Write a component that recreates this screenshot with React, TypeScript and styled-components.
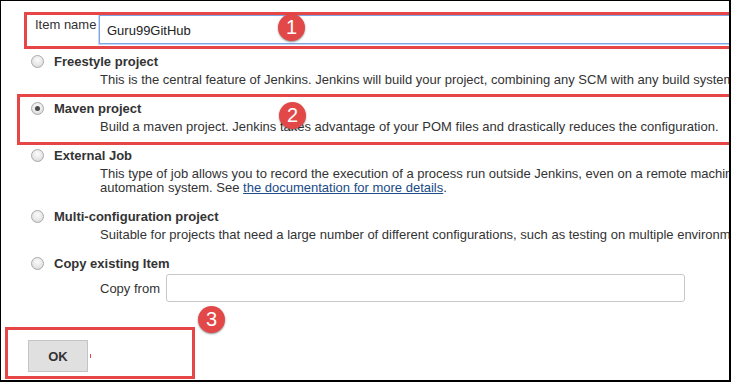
import React from 'react';
import styled, { createGlobalStyle } from 'styled-components';

interface Option {
  id: string;
  label: string;
  description: React.ReactNode;
  checked?: boolean;
}

const GlobalStyle = createGlobalStyle`
  html, body {
    margin: 0;
    padding: 0;
    background: #ffffff;
  }
  body {
    font-family: "Liberation Sans", Arial, sans-serif;
  }
`;

const Frame = styled.div`
  position: relative;
  width: 731px;
  height: 382px;
  box-sizing: border-box;
  border-style: solid;
  border-color: #000;
  border-width: 1px 2px 2px 1px;
  background: #fff;
  overflow: hidden;
  color: #333;
  font-family: "Liberation Sans", Arial, sans-serif;
  font-size: 13px;
  padding-top: 14px;
`;

const Section = styled.div`
  position: relative;
`;

const ItemRow = styled(Section)`
  display: flex;
  align-items: flex-start;
  padding-left: 34px;
  height: 29px;
`;

const ItemLabel = styled.label`
  width: 64px;
  flex: none;
  padding-top: 2px;
  line-height: 15px;
`;

const NameInput = styled.input`
  flex: none;
  width: 700px;
  height: 29px;
  box-sizing: border-box;
  border: 1px solid #7ea6e6;
  box-shadow: 0 0 0 1px #c4d7f5;
  outline: none;
  padding: 1px 0 0 7px;
  font-family: "Liberation Sans", Arial, sans-serif;
  font-size: 13px;
  color: #222;
`;

const OptionList = styled.div`
  display: flex;
  flex-direction: column;
  gap: 12px;
  margin-top: 8px;
`;

const OptionHead = styled.label`
  display: flex;
  align-items: center;
  height: 19px;
  padding-left: 30px;
  gap: 10px;
  font-weight: bold;
  white-space: nowrap;
`;

const Radio = styled.span<{ $checked?: boolean }>`
  position: relative;
  flex: none;
  width: 13px;
  height: 13px;
  box-sizing: border-box;
  border-radius: 50%;
  border: 1px solid #a9a9a9;
  background: radial-gradient(circle at 50% 35%, #fbfbfb 0%, #e6e6e6 60%, #cfcfcf 100%);

  &::after {
    content: '';
    display: ${p => (p.$checked ? 'block' : 'none')};
    position: absolute;
    left: 3px;
    top: 3px;
    width: 5px;
    height: 5px;
    border-radius: 50%;
    background: #4a4a4a;
  }
`;

const Description = styled.div`
  margin-top: 2px;
  padding-left: 99px;
  line-height: 14px;
  white-space: nowrap;
`;

const DocLink = styled.a`
  color: #204a87;
  text-decoration: underline;
`;

const CopyRow = styled.div`
  display: flex;
  align-items: center;
  margin-top: 1px;
  padding-left: 99px;
  gap: 6px;
`;

const CopyInput = styled.input`
  width: 519px;
  height: 28px;
  box-sizing: border-box;
  border: 1px solid #c8c8c8;
  border-radius: 3px;
  outline: none;
`;

const Footer = styled(Section)`
  display: flex;
  align-items: center;
  margin-top: 38px;
  padding-left: 27px;
  gap: 2px;
`;

const OkButton = styled.button`
  width: 60px;
  height: 32px;
  background: #e0e0e0;
  border: 1px solid #c4c4c4;
  border-radius: 0;
  font-family: "Liberation Sans", Arial, sans-serif;
  font-size: 13px;
  font-weight: bold;
  color: #333;
`;

const CursorMark = styled.span`
  width: 1px;
  height: 4px;
  background: #e64646;
`;

const Annotation = styled.div<{ $top: number; $left: number; $width: number; $height: number }>`
  position: absolute;
  top: ${p => p.$top}px;
  left: ${p => p.$left}px;
  width: ${p => p.$width}px;
  height: ${p => p.$height}px;
  box-sizing: border-box;
  border: 3px solid #e64646;
  pointer-events: none;
`;

const Badge = styled.div<{ $top: number; $left: number }>`
  position: absolute;
  top: ${p => p.$top}px;
  left: ${p => p.$left}px;
  width: 27px;
  height: 27px;
  border-radius: 50%;
  background: #e34848;
  box-shadow: 0 1px 2px rgba(0, 0, 0, 0.45);
  color: #fff;
  font-family: "Liberation Sans", Arial, sans-serif;
  font-size: 20px;
  line-height: 27px;
  text-align: center;
`;

const options: Option[] = [
  {
    id: 'freestyle',
    label: 'Freestyle project',
    description:
      'This is the central feature of Jenkins. Jenkins will build your project, combining any SCM with any build system, and this can be even used for something other than a software build.',
  },
  {
    id: 'maven',
    label: 'Maven project',
    checked: true,
    description:
      'Build a maven project. Jenkins takes advantage of your POM files and drastically reduces the configuration.',
  },
  {
    id: 'external',
    label: 'External Job',
    description: (
      <>
        This type of job allows you to record the execution of a process run outside Jenkins, even on a remote machine.
        This is designed so that you can use Jenkins as a dashboard of your existing
        <br />
        automation system. See <DocLink href="#">the documentation for more details</DocLink>.
      </>
    ),
  },
  {
    id: 'multi',
    label: 'Multi-configuration project',
    description:
      'Suitable for projects that need a large number of different configurations, such as testing on multiple environments, platform-specific builds, etc.',
  },
];

const App: React.FC = () => {
  return (
    <>
      <GlobalStyle />
      <Frame>
        <ItemRow>
          <ItemLabel>Item name</ItemLabel>
          <NameInput defaultValue="Guru99GitHub" />
          <Annotation $top={-3} $left={23} $width={720} $height={37} />
          <Badge $top={-1} $left={277}>1</Badge>
        </ItemRow>

        <OptionList>
          {options.map(option => (
            <Section key={option.id}>
              <OptionHead>
                <Radio $checked={option.checked} />
                {option.label}
              </OptionHead>
              <Description>{option.description}</Description>
              {option.checked && (
                <>
                  <Annotation $top={-5} $left={16} $width={730} $height={51} />
                  <Badge $top={3} $left={278}>2</Badge>
                </>
              )}
            </Section>
          ))}
          <Section>
            <OptionHead>
              <Radio />
              Copy existing Item
            </OptionHead>
            <CopyRow>
              <span>Copy from</span>
              <CopyInput />
            </CopyRow>
          </Section>
        </OptionList>

        <Footer>
          <OkButton>OK</OkButton>
          <CursorMark />
          <Annotation $top={-13} $left={4} $width={190} $height={52} />
          <Badge $top={-34} $left={197}>3</Badge>
        </Footer>
      </Frame>
    </>
  );
};

export default App;
